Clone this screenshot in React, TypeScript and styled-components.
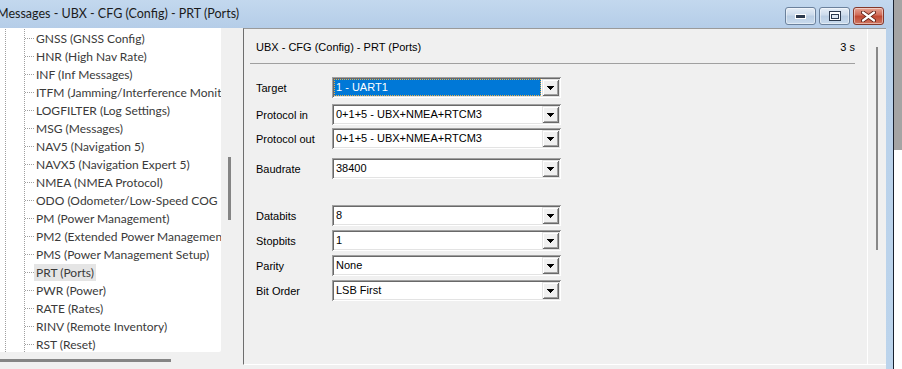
import React from "react";
import styled, { createGlobalStyle } from "styled-components";

const GlobalStyle = createGlobalStyle`
  html, body {
    margin: 0;
    padding: 0;
  }
  body {
    width: 902px;
    height: 369px;
    overflow: hidden;
    background: #f0f0f0;
    font-family: "Liberation Sans", Arial, sans-serif;
  }
`;

const treeItems = [
  "GNSS (GNSS Config)",
  "HNR (High Nav Rate)",
  "INF (Inf Messages)",
  "ITFM (Jamming/Interference Monitor)",
  "LOGFILTER (Log Settings)",
  "MSG (Messages)",
  "NAV5 (Navigation 5)",
  "NAVX5 (Navigation Expert 5)",
  "NMEA (NMEA Protocol)",
  "ODO (Odometer/Low-Speed COG Filter)",
  "PM (Power Management)",
  "PM2 (Extended Power Management)",
  "PMS (Power Management Setup)",
  "PRT (Ports)",
  "PWR (Power)",
  "RATE (Rates)",
  "RINV (Remote Inventory)",
  "RST (Reset)",
];

const fields = [
  { label: "Target", value: "1 - UART1", top: 13, active: true },
  { label: "Protocol in", value: "0+1+5 - UBX+NMEA+RTCM3", top: 6 },
  { label: "Protocol out", value: "0+1+5 - UBX+NMEA+RTCM3", top: 3 },
  { label: "Baudrate", value: "38400", top: 9 },
  { label: "Databits", value: "8", top: 26 },
  { label: "Stopbits", value: "1", top: 4 },
  { label: "Parity", value: "None", top: 4 },
  { label: "Bit Order", value: "LSB First", top: 4 },
];

const App = () => {
  return (
    <>
      <GlobalStyle />
      <Screen>
        <Window>
          <TitleBar>
            <Title>Messages - UBX - CFG (Config) - PRT (Ports)</Title>
            <Controls>
              <WinButton>
                <svg width="11" height="5" viewBox="0 0 11 5">
                  <rect x="0.5" y="0.5" width="10" height="4" fill="#2c3a4e" stroke="#fff" />
                </svg>
              </WinButton>
              <WinButton>
                <svg width="12" height="10" viewBox="0 0 12 10">
                  <rect x="0.5" y="0.5" width="11" height="9" fill="#fff" stroke="#2c3a4e" />
                  <rect x="2.5" y="3.5" width="7" height="4" fill="#dfe8f2" stroke="#2c3a4e" />
                </svg>
              </WinButton>
              <WinButton $close>
                <svg width="15" height="11" viewBox="0 0 15 11">
                  <path
                    d="M2 1.5 L13 9.5 M13 1.5 L2 9.5"
                    stroke="#5a1c12"
                    strokeWidth="4"
                    strokeLinecap="round"
                  />
                  <path
                    d="M2 1.5 L13 9.5 M13 1.5 L2 9.5"
                    stroke="#fff"
                    strokeWidth="2.2"
                    strokeLinecap="round"
                  />
                </svg>
              </WinButton>
            </Controls>
          </TitleBar>

          <Body>
            <TreeArea>
              <TreeRow>
                <TreePane>
                  <Guide>
                    <Guide $inner>
                      {treeItems.map((item) => (
                        <TreeItem key={item}>
                          <Connector />
                          <ItemLabel $selected={item === "PRT (Ports)"}>{item}</ItemLabel>
                        </TreeItem>
                      ))}
                    </Guide>
                  </Guide>
                </TreePane>
                <VScroll>
                  <VThumb />
                </VScroll>
              </TreeRow>
              <HScroll>
                <HThumb />
              </HScroll>
            </TreeArea>

            <Panel>
              <Content>
                <Header>
                  <span>UBX - CFG (Config) - PRT (Ports)</span>
                  <span>3 s</span>
                </Header>
                <Form>
                  {fields.map((f) => (
                    <Row key={f.label} $top={f.top}>
                      <FieldLabel>{f.label}</FieldLabel>
                      <Combo>
                        <ComboValue $active={f.active}>{f.value}</ComboValue>
                        <ArrowButton>
                          <svg width="7" height="4" viewBox="0 0 7 4" shapeRendering="crispEdges">
                            <path d="M0 0 H7 V1 H6 V2 H5 V3 H4 V4 H3 V3 H2 V2 H1 V1 H0 Z" fill="#000" />
                          </svg>
                        </ArrowButton>
                      </Combo>
                    </Row>
                  ))}
                </Form>
              </Content>
              <ScrollTrack>
                <ScrollThumb />
              </ScrollTrack>
            </Panel>

            <FrameEdge />
          </Body>
        </Window>
        <Desktop />
      </Screen>
    </>
  );
};

export default App;

const Screen = styled.div`
  display: flex;
  width: 902px;
  height: 369px;
  overflow: hidden;
`;

const Window = styled.div`
  width: 894px;
  height: 369px;
  display: flex;
  flex-direction: column;
  border-right: 1px solid #1a2230;
  box-sizing: border-box;
`;

const Desktop = styled.div`
  flex: 1;
  background: linear-gradient(#a4a4a4 0 150px, #ffffff 150px);
`;

const TitleBar = styled.div`
  height: 28px;
  flex-shrink: 0;
  display: flex;
  justify-content: space-between;
  align-items: flex-start;
  padding-right: 9px;
  background: linear-gradient(#c3d8ee, #b5cde8);
`;

const Title = styled.div`
  margin: 6px 0 0 -3px;
  font-family: Lato, "Noto Sans", sans-serif;
  font-size: 12.5px;
  line-height: 16px;
  color: #1b1b1b;
  white-space: nowrap;
`;

const Controls = styled.div`
  display: flex;
  gap: 3px;
  margin-top: 7px;
`;

const WinButton = styled.div<{ $close?: boolean }>`
  width: 31px;
  height: 18px;
  box-sizing: border-box;
  display: flex;
  align-items: center;
  justify-content: center;
  border-radius: 3px;
  border: 1px solid ${({ $close }) => ($close ? "#83382b" : "#6b819c")};
  background: ${({ $close }) =>
    $close
      ? "linear-gradient(#e6a595, #d06a57 45%, #bf4630 50%, #cf7661)"
      : "linear-gradient(#e6eef7, #cbdaeb 45%, #b9cde3 50%, #cadbed)"};
  box-shadow: inset 0 0 0 1px rgba(255, 255, 255, 0.45);
`;

const Body = styled.div`
  flex: 1;
  display: flex;
  background: #f0f0f0;
`;

const TreeArea = styled.div`
  width: 237px;
  display: flex;
  flex-direction: column;
`;

const TreeRow = styled.div`
  height: 324px;
  display: flex;
`;

const TreePane = styled.div`
  width: 221px;
  background: #fff;
  overflow: hidden;
  padding: 1px 0 0 5px;
  box-sizing: border-box;
  border-bottom-right-radius: 2px;
`;

const Guide = styled.div<{ $inner?: boolean }>`
  height: 100%;
  box-sizing: border-box;
  border-left: 1px dotted #a0a0a0;
  padding-left: ${({ $inner }) => ($inner ? "0" : "18px")};
`;

const TreeItem = styled.div`
  height: 18px;
  display: flex;
  align-items: center;
  white-space: nowrap;
`;

const Connector = styled.div`
  width: 9px;
  flex-shrink: 0;
  border-top: 1px dotted #a0a0a0;
`;

const ItemLabel = styled.span<{ $selected?: boolean }>`
  padding: 0 2px;
  font-family: Lato, "Noto Sans", sans-serif;
  font-size: 12px;
  line-height: 17px;
  color: #3a3a3a;
  background: ${({ $selected }) => ($selected ? "#e5e5e5" : "transparent")};
`;

const VScroll = styled.div`
  width: 16px;
  padding: 129px 0 0 7px;
  box-sizing: border-box;
`;

const VThumb = styled.div`
  width: 3px;
  height: 63px;
  background: #858585;
`;

const HScroll = styled.div`
  flex: 1;
  padding-top: 7px;
`;

const HThumb = styled.div`
  width: 171px;
  height: 3px;
  background: #858585;
`;

const Panel = styled.div`
  width: 643px;
  height: 337px;
  margin-left: 6px;
  box-sizing: border-box;
  display: flex;
  border-top: 1px solid #9a9a9a;
  border-left: 1px solid #6e6e6e;
  border-bottom: 1px solid #fff;
`;

const Content = styled.div`
  flex: 1;
  border-right: 1px solid #fff;
  padding: 0 12px 0 6px;
`;

const Header = styled.div`
  display: flex;
  justify-content: space-between;
  padding: 11px 0 9px 6px;
  border-bottom: 1px solid #a0a0a0;
  font-size: 11px;
  line-height: 14px;
  color: #000;
`;

const Form = styled.div`
  display: flex;
  flex-direction: column;
  padding-left: 6px;
`;

const Row = styled.div<{ $top: number }>`
  display: grid;
  grid-template-columns: 76px 229px;
  align-items: center;
  height: 21px;
  margin-top: ${({ $top }) => $top}px;
`;

const FieldLabel = styled.span`
  font-size: 11px;
  color: #000;
`;

const Combo = styled.div`
  height: 21px;
  box-sizing: border-box;
  display: flex;
  padding: 2px;
  background: #fff;
  box-shadow: inset 1px 1px #a0a0a0, inset -1px -1px #ffffff, inset 2px 2px #696969,
    inset -2px -2px #e3e3e3;
`;

const ComboValue = styled.div<{ $active?: boolean }>`
  flex: 1;
  margin-right: 1px;
  box-sizing: border-box;
  padding-left: 1px;
  font-size: 11px;
  line-height: 15px;
  white-space: nowrap;
  color: ${({ $active }) => ($active ? "#fff" : "#000")};
  background: ${({ $active }) => ($active ? "#0078d7" : "transparent")};
  border: 1px dotted ${({ $active }) => ($active ? "#e8b04a" : "transparent")};
`;

const ArrowButton = styled.div`
  width: 17px;
  height: 17px;
  box-sizing: border-box;
  display: flex;
  align-items: center;
  justify-content: center;
  background: #f0f0f0;
  box-shadow: inset 1px 1px #e3e3e3, inset -1px -1px #696969, inset 2px 2px #ffffff,
    inset -2px -2px #a0a0a0;
`;

const ScrollTrack = styled.div`
  width: 18px;
  padding: 18px 0 0 8px;
  box-sizing: border-box;
`;

const ScrollThumb = styled.div`
  width: 2px;
  height: 203px;
  background: #888;
`;

const FrameEdge = styled.div`
  width: 7px;
  background: linear-gradient(#b9d1ea, #bcd4ec);
`;
